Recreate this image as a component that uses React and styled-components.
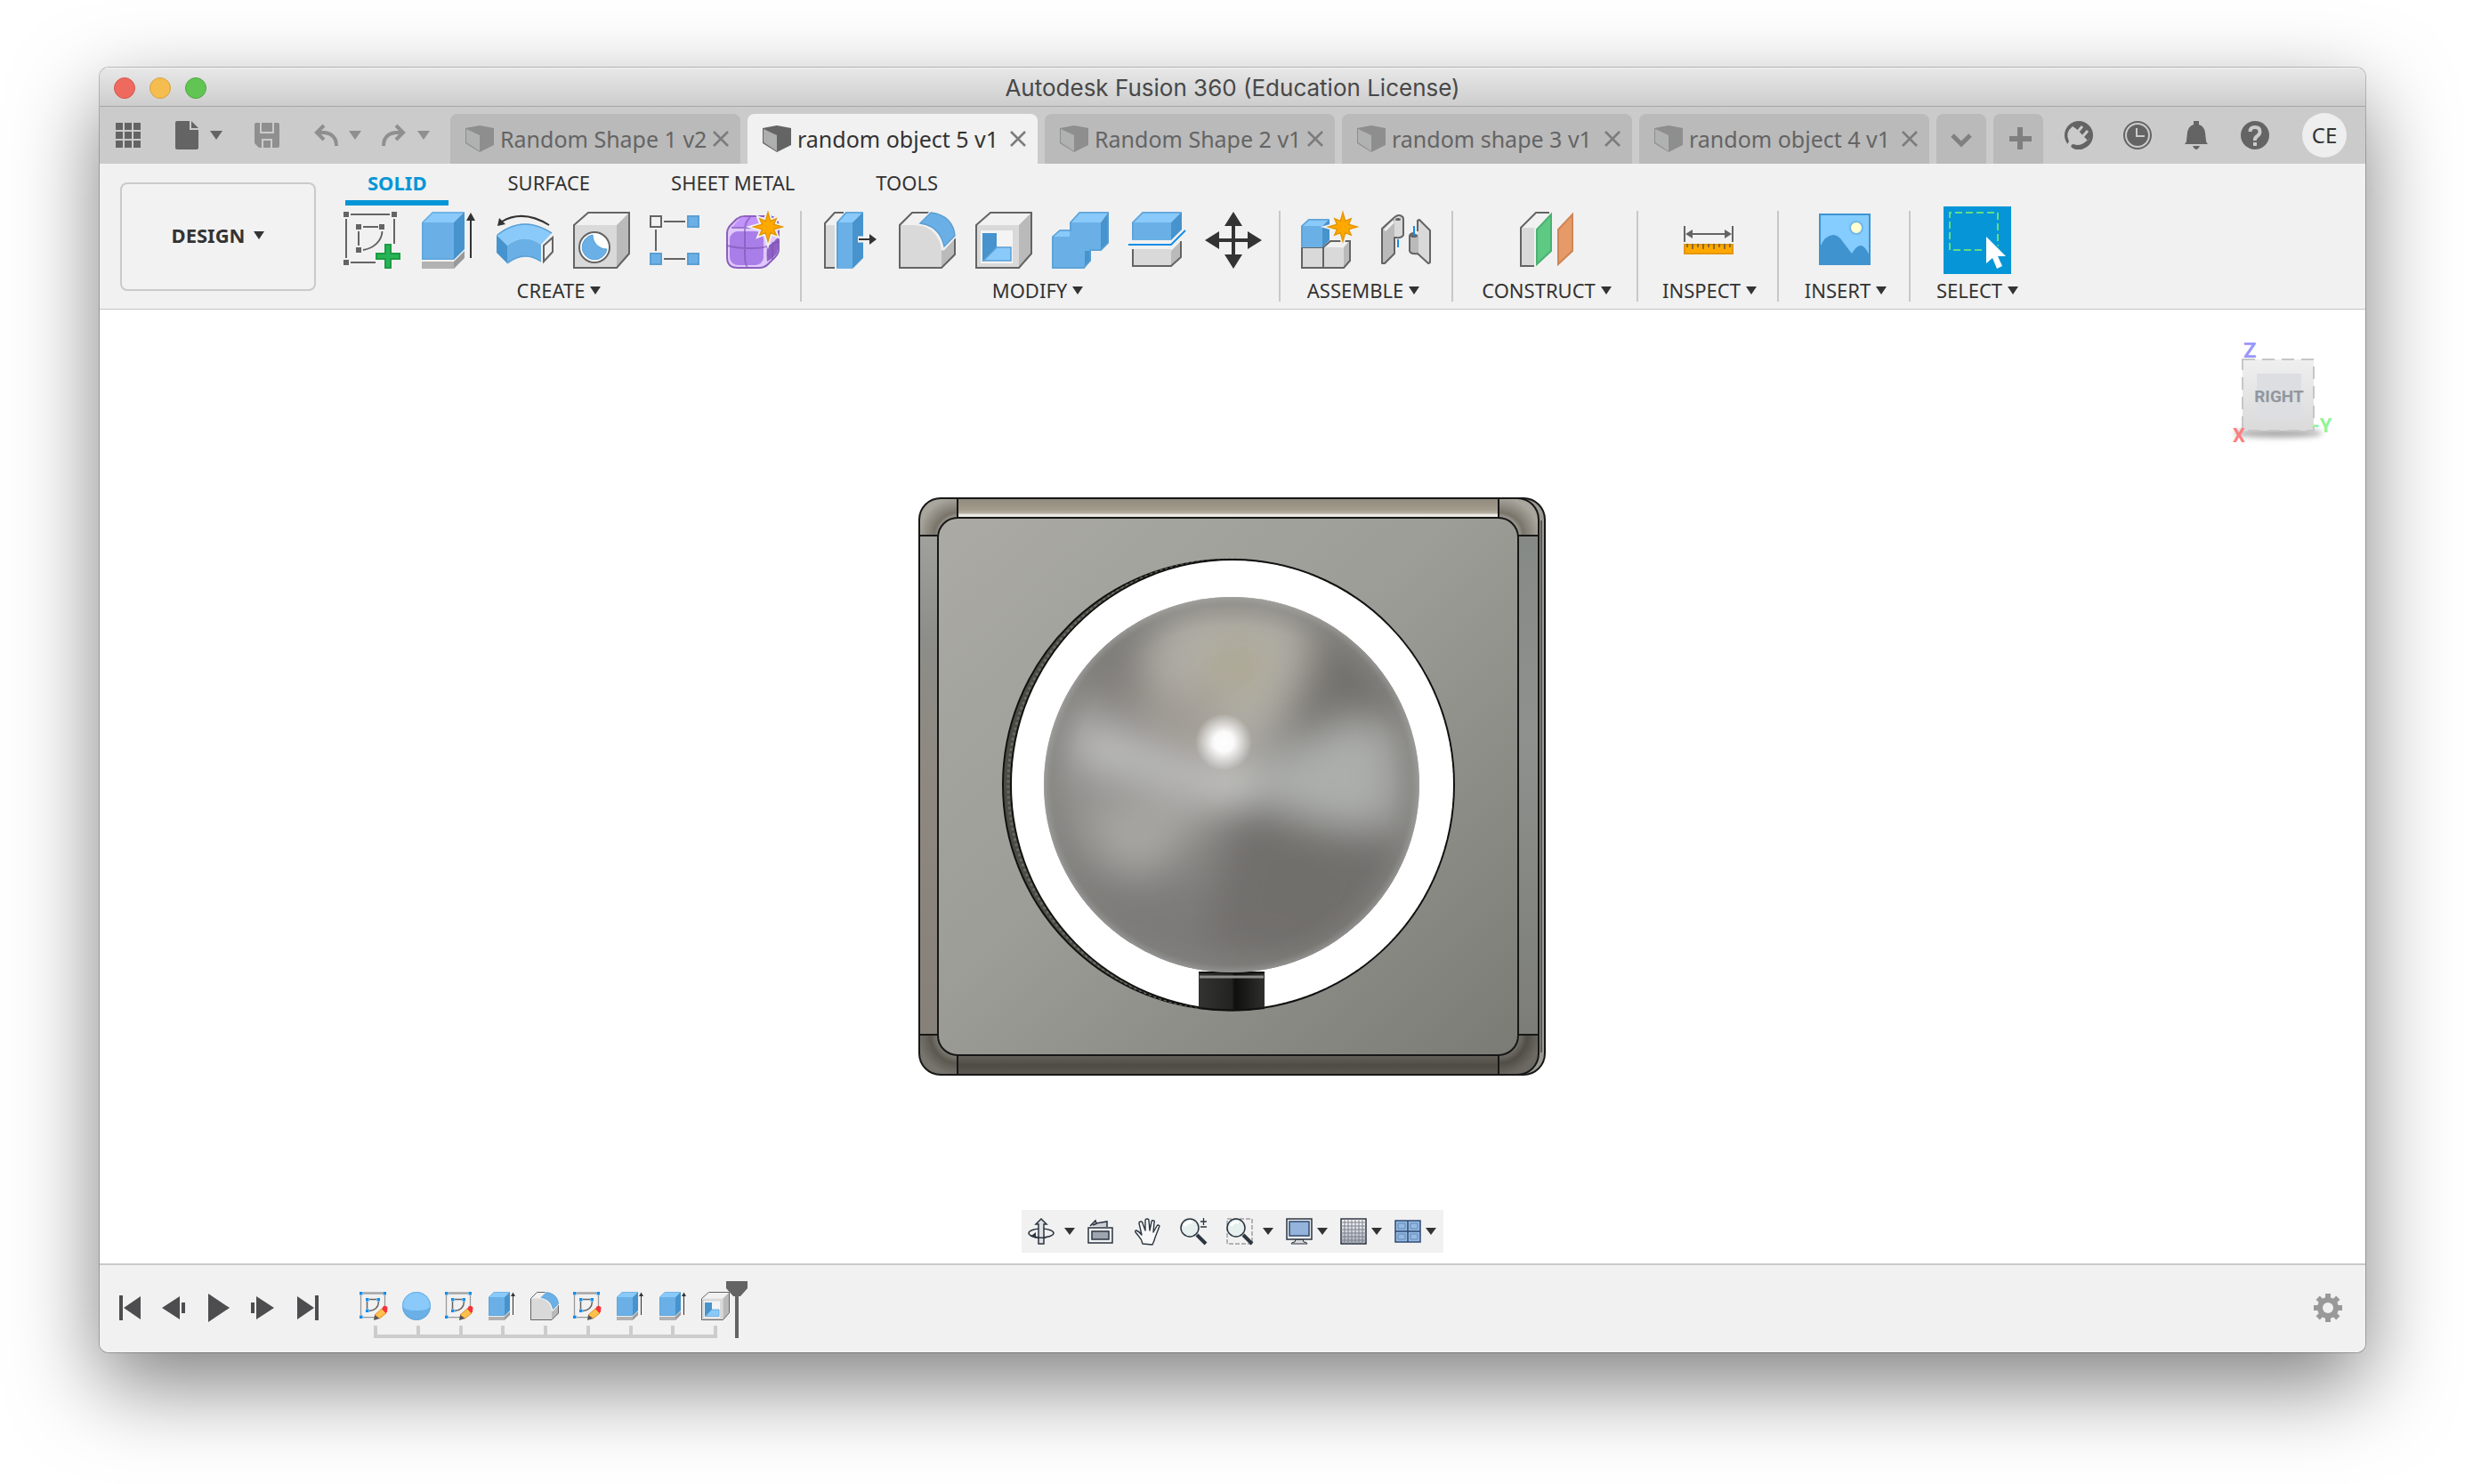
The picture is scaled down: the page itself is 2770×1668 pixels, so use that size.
import React from "react";
import styled, { createGlobalStyle, css } from "styled-components";

const ui = `"Noto Sans", "Open Sans", sans-serif`;

const GlobalStyle = createGlobalStyle`
  * { box-sizing: border-box; }
  body { margin: 0; background: #fff; font-family: ${ui}; color: #333; }
  button { appearance: none; border: 0; margin: 0; padding: 0; background: none; font: inherit; color: inherit; cursor: pointer; }
  ul, ol { list-style: none; margin: 0; padding: 0; }
  h1 { margin: 0; }
  svg { display: block; flex: none; overflow: visible; }
`;

/* ---------- shell ---------- */

const Desktop = styled.div`
  min-height: 100vh;
  padding: 76px 112px 148px;
  display: flex;
`;

const AppWindow = styled.div`
  flex: 1;
  min-width: 0;
  display: flex;
  flex-direction: column;
  border-radius: 10px;
  overflow: hidden;
  background: #fff;
  box-shadow: 0 0 0 1px rgba(0, 0, 0, 0.22), 0 36px 96px rgba(0, 0, 0, 0.5);
`;

const TitleBar = styled.header`
  display: flex;
  align-items: center;
  height: 44px;
  padding: 2px 16px 0;
  background: linear-gradient(#e8e8e8, #cdcdcd);
  border-bottom: 1px solid #a6a6a6;
  box-shadow: inset 0 1px 0 #f4f4f4;
`;

const Lights = styled.div`
  flex: 1;
  display: flex;
  gap: 16px;
`;

const Light = styled.button`
  width: 24px;
  height: 24px;
  border-radius: 50%;
  background: ${(p) => p.$fill};
  border: 1px solid ${(p) => p.$edge};
`;

const Title = styled.h1`
  font: 400 26px/32px Inter, Roboto, sans-serif;
  color: #484848;
  white-space: nowrap;
`;

const TitleSpacer = styled.div`
  flex: 1;
`;

/* ---------- document bar ---------- */

const DocumentBar = styled.nav`
  display: flex;
  align-items: center;
  height: 64px;
  padding: 0 21px 0 16px;
  background: #cbcbcb;
`;

const QuickActions = styled.div`
  display: flex;
  align-items: center;
  gap: ${(p) => (p.$tight ? 21 : 34)}px;
`;

const IconButton = styled.button`
  display: flex;
  align-items: center;
  gap: 10px;
  color: ${(p) => (p.$muted ? "#8f8f8f" : "#646464")};
`;

const DocTabs = styled.div`
  flex: 1;
  min-width: 0;
  align-self: flex-end;
  display: flex;
  gap: 8px;
  margin: 0 24px 0 23px;
`;

const tabShape = css`
  height: 56px;
  display: flex;
  align-items: center;
  border-radius: 8px 8px 0 0;
  background: #bababa;
`;

const DocTab = styled.div`
  ${tabShape}
  flex: 0 1 326px;
  min-width: 0;
  padding: 0 13px 0 17px;
  color: #646464;
  ${(p) => p.$active && css`background: #f1f1f1; color: #333;`}
`;

const DocTabName = styled.button`
  flex: 1;
  min-width: 0;
  display: flex;
  align-items: center;
  gap: 7px;
  font-size: 25px;
  line-height: 34px;
  white-space: nowrap;
`;

const CloseButton = styled.button`
  color: #7c7c7c;
`;

const SmallTab = styled.button`
  ${tabShape}
  width: 56px;
  flex: none;
  justify-content: center;
  color: #808080;
`;

const Services = styled.div`
  display: flex;
  align-items: center;
  gap: 34px;
`;

const Avatar = styled.button`
  width: 50px;
  height: 50px;
  margin-left: 3px;
  border-radius: 50%;
  background: #eee;
  color: #333;
  font-size: 24px;
  line-height: 50px;
`;

/* ---------- ribbon ---------- */

const Ribbon = styled.section`
  display: flex;
  align-items: flex-start;
  height: 164px;
  padding-left: 23px;
  background: #f1f1f1;
  border-bottom: 1px solid #c6c6c6;
`;

const WorkspaceButton = styled.button`
  display: flex;
  align-items: center;
  justify-content: center;
  gap: 10px;
  width: 220px;
  height: 122px;
  margin: 21px 31px 0 0;
  padding-bottom: 4px;
  border: 2px solid #cacaca;
  border-radius: 8px;
  background: #f2f2f2;
  font-size: 22px;
  font-weight: 700;
  line-height: 30px;
`;

const RibbonMain = styled.div`
  flex: 1;
  min-width: 0;
`;

const RibbonTabs = styled.div`
  display: flex;
  gap: 41px;
  padding-left: 2px;
  height: 47px;
`;

const RibbonTab = styled.button`
  height: 47px;
  padding: 10px 25px 9px;
  font-size: 22px;
  line-height: 22px;
  white-space: nowrap;
  border-bottom: 6px solid transparent;
  ${(p) => p.$active && css`color: #0696d7; border-color: #0696d7; font-weight: 700;`}
`;

const ToolGroups = styled.div`
  display: flex;
  margin-top: 1px;
`;

const ToolGroup = styled.div`
  flex: none;
  display: flex;
  flex-direction: column;
  align-items: center;
  width: ${(p) => p.$width}px;
`;

const GroupDivider = styled.div`
  flex: none;
  width: 2px;
  height: 102px;
  margin: 5px 23px 0 19px;
  background: #c8c8c8;
`;

const ToolRow = styled.div`
  display: flex;
  align-items: center;
  gap: 22px;
  height: 76px;
`;

const ToolButton = styled.button`
  display: block;
  background: ${(p) => (p.$active ? "#0696d7" : "none")};
`;

const GroupLabel = styled.button`
  display: flex;
  align-items: center;
  gap: 6px;
  margin-top: 6px;
  padding-right: ${(p) => (p.$wide ? 10 : 0)}px;
  font-size: 22px;
  line-height: 24px;
  white-space: nowrap;
`;

/* ---------- canvas ---------- */

const Viewport = styled.main`
  position: relative;
  flex: 1;
  display: flex;
  align-items: center;
  justify-content: center;
  padding-top: 2px;
  background: #fff;
`;

const ViewCube = styled.button`
  position: absolute;
  top: 32px;
  right: 32px;
`;

const NavBar = styled.div`
  position: absolute;
  bottom: 12px;
  left: 50%;
  transform: translateX(-50%);
  display: flex;
  align-items: center;
  gap: 14px;
  height: 48px;
  padding: 0 8px 0 7px;
  background: #f1f1f1;
`;

const NavButton = styled.button`
  display: flex;
  align-items: center;
  gap: ${(p) => (p.$split ? 11 : 5)}px;
  margin-right: ${(p) => (p.$plain ? 8 : 0)}px;
  color: #333;
`;

/* ---------- timeline ---------- */

const Timeline = styled.footer`
  display: flex;
  align-items: flex-end;
  height: 100px;
  padding: 0 26px 16px 18px;
  background: #f1f1f1;
  border-top: 2px solid #cacaca;
`;

const Playback = styled.div`
  display: flex;
  gap: 18px;
  margin: 0 42px 18px 0;
  color: #4d4d4f;
`;

const PlaybackButton = styled.button`
  width: 32px;
  height: 32px;
`;

const History = styled.div`
  display: flex;
  flex-direction: column;
`;

const HistoryItems = styled.ol`
  display: flex;
  gap: 16px;
`;

const HistoryTrack = styled.div`
  display: flex;
  justify-content: space-between;
  height: 14px;
  margin: 6px 14px 0 16px;
  border-bottom: 4px solid #ccc;
`;

const HistoryTick = styled.span`
  width: 4px;
  background: #ccc;
`;

const HistoryMarker = styled.button`
  margin-left: -4px;
`;

const SettingsButton = styled.button`
  margin: 0 0 18px auto;
  color: #999;
`;

/* ---------- icons ---------- */

const Svg = ({ s = 64, v = "0 0 64 64", children, ...r }) => (
  <svg width={s} height={s} viewBox={v} fill="none" aria-hidden="true" {...r}>{children}</svg>
);

const Caret = ({ w = 12, h = 9 }) => (
  <svg width={w} height={h} viewBox="0 0 12 9" preserveAspectRatio="none" aria-hidden="true"><path d="M0 0h12L6 9z" fill="currentColor" /></svg>
);

const BLUE = "#6ab0e6", LIGHT = "#8acafb", DARK = "#4693cd", EDGE = "#5a9fd4", LINE = "#646464";
const GREY = "#d9d9d9", PALE = "#f1f1f1", SHADE = "#bababa";

const Star = ({ x = 47, y = 17 }) => {
  const pts = Array.from({ length: 16 }, (_, i) => {
    const r = i % 2 ? 7 : i % 4 ? 13 : 16;
    const a = (i * Math.PI) / 8;
    return `${(x + r * Math.sin(a)).toFixed(1)},${(y - r * Math.cos(a)).toFixed(1)}`;
  }).join(" ");
  return (
    <g>
      <polygon points={pts} fill="#f1f1f1" stroke="#f1f1f1" strokeWidth="5" />
      <polygon points={pts} fill="#ffa800" stroke="#e59700" strokeWidth="1.5" />
    </g>
  );
};

const SketchTool = () => (
  <Svg>
    <g fill={LINE}>
      <path d="M0 0h6v6H0zM54 0h6v6h-6zM0 54h6v6H0zM14 14h6v6h-6zM40 14h6v6h-6zM14 40h6v6h-6z" />
    </g>
    <path d="M8 3h44M3 8v44M57 8v28M8 57h28M22 17h17M17 22v16M22 43C34 41 43 33 43.500 22" stroke={LINE} strokeWidth="2" />
    <path d="M47 37h6v10h10v6H53v10h-6V53H37v-6h10z" fill="#26b456" stroke="#1d9c45" strokeWidth="2" />
  </Svg>
);

const ExtrudeTool = ({ s }) => (
  <Svg s={s}>
    <path d="M2 12h36v42H2z" fill={BLUE} />
    <path d="M2 12 14 0h36L38 12z" fill={LIGHT} />
    <path d="M38 12 50 0v42L38 54z" fill={DARK} />
    <path d="M3 12v41h35M3 12 14 1h35" stroke={EDGE} strokeWidth="1.500" opacity=".7" />
    <path d="M2 56h36v8H2z" fill="#b2b2b2" />
    <path d="m38 56 12-12v8L38 64z" fill="#999" />
    <path d="M57 8v44" stroke="#333" strokeWidth="2" />
    <path d="m57 1 5 9H52z" fill="#333" />
  </Svg>
);

const RevolveTool = () => (
  <Svg>
    <path d="M6 11Q30-3 59 15" stroke="#333" strokeWidth="2" />
    <path d="m1 16 2-9 7 7z" fill="#333" />
    <path d="M0 26Q30 2 62 24L50 37Q31 23 12 38z" fill={LIGHT} />
    <path d="M1 26Q30 3 62 24" stroke={EDGE} strokeWidth="1.500" />
    <path d="m0 26 12 12v20L0 46z" fill={DARK} />
    <path d="M12 38Q31 23 50 37v19Q31 43 12 58z" fill={BLUE} />
    <path d="M12 58Q31 43 50 56" stroke={EDGE} strokeWidth="1.500" />
    <path d="m53 38 10-9v16L53 56z" fill={PALE} stroke={LINE} strokeWidth="2" />
  </Svg>
);

const Block = () => (
  <g>
    <path d="M1 15h48v48H1z" fill={GREY} />
    <path d="M1 15 17 1h46L49 15z" fill={PALE} />
    <path d="M49 15 63 1v46L49 63z" fill={SHADE} />
    <path d="M1 15 17 1h46v46L49 63H1z" stroke={LINE} strokeWidth="2" />
  </g>
);

const HoleTool = () => (
  <Svg>
    <Block />
    <circle cx="24" cy="40" r="17" fill="#fff" stroke={LINE} strokeWidth="2" />
    <path d="M22 26A14 14 0 1 0 38 42C29 42 22 35 22 26z" fill={BLUE} stroke={EDGE} strokeWidth="1" />
  </Svg>
);

const PatternTool = () => (
  <Svg>
    <path d="M1 5h12v12H1z" stroke={LINE} strokeWidth="2" />
    <path d="M43 5h12v12H43zM1 47h12v12H1zM43 47h12v12H43z" fill={BLUE} stroke={EDGE} strokeWidth="2" />
    <path d="M16 11h24M7 20v24M16 53h24" stroke={LINE} strokeWidth="2" />
  </Svg>
);

const FormTool = () => (
  <Svg>
    <path d="M1 24C1 17 7 13 12 8q4-3 9-3h27q11 1 11 13v24q0 5-4 9l-8 8q-4 4-10 4H13Q1 63 1 51z" fill="#e0c8fb" stroke="#8b60be" strokeWidth="2" />
    <path d="m6 18 8-9q3-3 7-3h13l4 12z" fill="#c294fb" />
    <rect x="4" y="22" width="38" height="38" rx="9" fill="#aa7ee8" />
    <path d="M46 40q6-4 12-11v13q0 4-3 7-5 5-9 7-1-8 0-16z" fill="#8f61c6" />
    <path d="M27 6q-6 6-6 14v28q0 12 3 14M1 38q10 3 24 3 22 1 34-8M6 18h32M52 34v20" stroke="#7a52ad" strokeWidth="2" opacity=".6" />
    <Star />
  </Svg>
);

const PressPullTool = () => (
  <Svg>
    <path d="M24 1H14L3 13v50h11" fill={PALE} />
    <path d="M3 15h11v47H3z" fill={GREY} />
    <path d="M24 1H14L3 13v50h11" stroke={LINE} strokeWidth="2" />
    <path d="M16 12h18v52H16z" fill={BLUE} />
    <path d="M16 12 26 0h20L34 12z" fill={LIGHT} />
    <path d="M34 12 46 0v52L34 64z" fill={DARK} />
    <path d="M17 63V12L27 1h18" stroke={EDGE} strokeWidth="1.500" />
    <path d="M40 31h16" stroke="#f1f1f1" strokeWidth="7" />
    <path d="M41 31h14" stroke="#333" strokeWidth="2" />
    <path d="m61 31-8-6v12z" fill="#333" />
  </Svg>
);

const FilletTool = ({ s }) => (
  <Svg s={s}>
    <path d="M1 15 15 1h19L23 15z" fill={PALE} />
    <path d="M48 44 63 30v19L48 63z" fill={SHADE} />
    <path d="M1 15h20c16 1 27 15 27 31v17H1z" fill={GREY} />
    <path d="M34 1H15L1 15v48h47l15-15V30" stroke={LINE} strokeWidth="2" />
    <path d="M23 14 36 0c18 2 27 12 28 27L51 41C48 26 39 16 23 14z" fill={BLUE} stroke="#f1f1f1" strokeWidth="3" />
    <path d="M24 13 36 1c17 2 26 12 27 26L51 39C48 25 39 15 24 13z" fill={BLUE} stroke={EDGE} strokeWidth="1.500" />
  </Svg>
);

const ShellTool = ({ s }) => (
  <Svg s={s}>
    <Block />
    <path d="M6 21h36v37H6z" fill="#f4f4f4" />
    <path d="M8 24h16v16L8 56z" fill={DARK} />
    <path d="M24 40h16v15H9z" fill={LIGHT} stroke={EDGE} strokeWidth="1.500" />
  </Svg>
);

const CombineTool = () => (
  <Svg>
    <path d="M0 28 9 20h12v8zM20 12 31 0h33L55 12z" fill={LIGHT} />
    <path d="M55 12 64 0v35l-9 9zM36 44h8v11l-8 9z" fill={DARK} />
    <path d="M0 28h20V12h35v32H37v20H0z" fill={BLUE} />
    <path d="M1 63V28l8-7h12v-9L31 1h32v34l-8 8H43v12l-7 8z" stroke={EDGE} strokeWidth="1.500" />
  </Svg>
);

const SplitTool = () => (
  <Svg>
    <path d="M4 12h44v20H4z" fill={BLUE} />
    <path d="M4 12 16 0h44L48 12z" fill={LIGHT} />
    <path d="M48 12 60 0v20L48 32z" fill={DARK} />
    <path d="M5 31V12L16 1h43" stroke={EDGE} strokeWidth="1.500" />
    <path d="M0 37h48l16-16" stroke="#158de6" strokeWidth="2" />
    <path d="M5 42h43v19H5z" fill={GREY} />
    <path d="m48 44 11-11v18L48 61z" fill={SHADE} />
    <path d="M5 42v19h43l11-10V33" stroke={LINE} strokeWidth="2" />
  </Svg>
);

const MoveTool = () => (
  <Svg>
    <path d="M32 10v44M10 32h44" stroke="#333" strokeWidth="4" />
    <path d="m32 0 10 16H22zM32 64 22 48h20zM0 32l16-10v20zM64 32 48 42V22z" fill="#333" />
  </Svg>
);

const ComponentTool = () => (
  <Svg>
    <path d="M1 40h24v23H1z" fill={GREY} stroke={LINE} strokeWidth="2" />
    <path d="m25 40 8-8h22l-7 8z" fill={PALE} />
    <path d="m48 40 7-8v23l-7 8z" fill={SHADE} />
    <path d="M25 40h23v23H25z" fill={GREY} />
    <path d="m25 40 8-7h22v22l-7 8H25z" stroke={LINE} strokeWidth="2" />
    <path d="M0 16h24v24H0z" fill={BLUE} />
    <path d="m0 16 8-8h24l-8 8z" fill={LIGHT} />
    <path d="m24 16 8-8v24l-8 8z" fill={DARK} />
    <path d="M1 39V16l8-7h22" stroke={EDGE} strokeWidth="1.500" />
    <Star />
  </Svg>
);

const JointTool = () => (
  <Svg>
    <path d="M5 19 19 6v41L8 58H5z" fill={SHADE} />
    <path d="M19 6q10-6 10 1v20q-4 4-10 1z" fill={GREY} />
    <path d="M29 8v18q-2 4-8 3h-2v18L8 58H5V19L17 8q6-6 10-3 2 1 2 3z" stroke={LINE} strokeWidth="2" strokeLinejoin="round" />
    <path d="m8 21 10-10" stroke={PALE} strokeWidth="3" />
    <ellipse cx="23" cy="8.500" rx="3" ry="1.500" fill={LINE} />
    <path d="M23 31v9" stroke="#158de6" strokeWidth="2" />
    <path d="M45 10h3l11 11v37h-2L45 47z" fill={GREY} />
    <path d="M36 27q5-6 10 0v20q-5 2-10-1z" fill={SHADE} />
    <path d="M45 22V10l2-1 12 12v36l-2 1-12-11q-8 1-9-3V27q1-3 5-3" stroke={LINE} strokeWidth="2" strokeLinejoin="round" />
    <ellipse cx="41" cy="27" rx="4" ry="2" fill={LINE} />
    <path d="M41 16v11" stroke="#158de6" strokeWidth="2" />
  </Svg>
);

const PlaneTool = () => (
  <Svg>
    <path d="M3 18h15v43H3z" fill={GREY} />
    <path d="M3 18 20 1h15L18 18z" fill={PALE} />
    <path d="M35 1H20L3 18v43h15" stroke={LINE} strokeWidth="2" />
    <path d="M20 19 38 1v43L20 61z" fill={PALE} stroke={PALE} strokeWidth="3" />
    <path d="M21 20 37 3v41L21 59z" fill="#5dc983" stroke="#4bb171" strokeWidth="2" />
    <path d="M45 20 61 3v41L45 59z" fill="#e69a68" stroke="#cf8554" strokeWidth="2" />
  </Svg>
);

const MeasureTool = () => (
  <Svg>
    <path d="M4 16v18M58 16v18M8 25h46" stroke={LINE} strokeWidth="2" />
    <path d="m5 25 8-5v10zM57 25l-8-5v10z" fill={LINE} />
    <path d="M4 37h54v10H4z" fill="#ffa800" stroke="#e59700" strokeWidth="2" />
    <path d="M7 36v4M13 36v6M19 36v4M25 36v6M31 36v4M37 36v6M43 36v4M49 36v6M55 36v4" stroke="#8a6a30" strokeWidth="2" />
  </Svg>
);

const PictureTool = () => (
  <Svg>
    <path d="M3 3h56v56H3z" fill="#85ccff" />
    <path d="M3 40q6-14 15-14 6 0 11 8l10 13q5-9 10-9t10 12v9H3z" fill="#3f94cf" />
    <circle cx="44" cy="18" r="7" fill="#ffffcf" stroke="#6fb7ea" strokeWidth="2" />
    <path d="M3 3h56v56H3z" stroke="#3f94cf" strokeWidth="2" />
  </Svg>
);

const SelectTool = () => (
  <Svg s={76} v="0 0 76 76">
    <path d="M7 49V7h54v42z" stroke="#63dc84" strokeWidth="2" strokeDasharray="8 4" />
    <path d="M48 34v30l7-6 5 12 6-3-5-11h9z" fill="#0696d7" stroke="#0696d7" strokeWidth="4" />
    <path d="M48 34v30l7-6 5 12 6-3-5-11h9z" fill="#fff" />
  </Svg>
);

const GridIcon = () => (
  <Svg s={32} v="0 0 32 32">
    <path fill="currentColor" d="M2 2h8v8H2zM12 2h8v8h-8zM22 2h8v8h-8zM2 12h8v8H2zM12 12h8v8h-8zM22 12h8v8h-8zM2 22h8v8H2zM12 22h8v8h-8zM22 22h8v8h-8z" />
  </Svg>
);
const FileIcon = () => (
  <Svg s={32} v="0 0 32 32"><path fill="currentColor" d="M5 0h14v10h10v20q0 2-2 2H5q-2 0-2-2V2q0-2 2-2zM21 0l8 8h-8z" /></Svg>
);
const SaveIcon = () => (
  <Svg s={32} v="0 0 32 32">
    <path fill="currentColor" fillRule="evenodd" d="M2 4q0-2 2-2h24q2 0 2 2v24q0 2-2 2H7l-5-5zM8 2v12h16V2h-2v10H10V2zM10 30h2v-8h8v8h2V20H10z" />
  </Svg>
);
const UndoIcon = ({ flip }) => (
  <Svg s={32} v="0 0 32 32" transform={flip ? "scale(-1 1)" : undefined}>
    <path d="M14 5 6 13l8 8M6 13q22-2 22 15" stroke="currentColor" strokeWidth="4" />
  </Svg>
);
const CubeIcon = ({ active }) => (
  <Svg s={32} v="0 0 32 32">
    <path d="M0 4 16 1l16 3v19L16 31 0 21z" fill={active ? "#646464" : "#8e8e8e"} />
    <path d="M1 5l15 7v18L1 20z" fill={active ? "#adafaf" : "#b0b2b2"} />
  </Svg>
);
const CloseIcon = () => (
  <Svg s={18} v="0 0 18 18"><path d="m1 1 16 16M17 1 1 17" stroke="currentColor" strokeWidth="2.500" /></Svg>
);
const ChevronIcon = () => (
  <Svg s={32} v="0 0 32 32"><path d="m6 12 10 10 10-10" stroke="currentColor" strokeWidth="5" /></Svg>
);
const PlusIcon = () => (
  <Svg s={32} v="0 0 32 32"><path d="M18 3v25M6 16h25" stroke="currentColor" strokeWidth="6" /></Svg>
);
const PlugIcon = () => (
  <Svg s={32} v="0 0 32 32">
    <circle cx="16" cy="16" r="16" fill="currentColor" />
    <path d="M9 6l3 2 16 12-4 3q-7 6-14 3l-4 5-4-3 3-5Q0 13 9 6z" fill="#cbcbcb" />
    <path d="m11 6 15 16 4-6L20 2z" fill="currentColor" />
    <path d="m14 13 6-7M20 18l6-7" stroke="#cbcbcb" strokeWidth="3" />
    <path d="M7 28q2 3 6 4h6l8-5 3-5q-3 6-9 7-6 1-12-3z" fill="currentColor" />
  </Svg>
);
const ClockIcon = () => (
  <Svg s={32} v="0 0 32 32">
    <circle cx="16" cy="16" r="15" stroke="currentColor" strokeWidth="2" />
    <circle cx="16" cy="16" r="12" fill="currentColor" />
    <path d="M15 8v9h9" stroke="#cbcbcb" strokeWidth="2" />
  </Svg>
);
const BellIcon = () => (
  <Svg s={32} v="0 0 32 32">
    <path fill="currentColor" d="M13 0h6v4q6 2 7 9l1 9q0 2 2 4H3q2-2 2-4l1-9q1-7 7-9zM12 28h8q-4 8-8 0z" />
  </Svg>
);
const HelpIcon = () => (
  <Svg s={32} v="0 0 32 32">
    <circle cx="16" cy="16" r="16" fill="currentColor" />
    <path d="M10.500 12q0-5 5.500-5t5.500 5q0 3-3 5t-2.500 5" stroke="#cbcbcb" strokeWidth="4" />
    <path d="M14 24h4v4h-4z" fill="#cbcbcb" />
  </Svg>
);

/* ---------- navigation icons ---------- */

const NAVY = "#2c3540";
const Nav = (p) => <Svg s={30} v="0 0 30 30" {...p} />;

const OrbitIcon = () => (
  <Nav>
    <ellipse cx="15" cy="17" rx="14" ry="5" stroke={NAVY} strokeWidth="1.500" />
    <path d="m15 1 6 6h-3v22h-6V7H9z" fill="#dde0e4" stroke={NAVY} strokeWidth="1.500" />
    <path d="M3 20q7 3 17 2" stroke={NAVY} strokeWidth="1.500" />
    <path d="m4 20 5-4v7z" fill={NAVY} />
  </Nav>
);
const LookAtIcon = () => (
  <Nav>
    <path d="m3 9 6-6 1 3 12-2v6M6 8l5-2" fill="#c9ccd1" stroke={NAVY} strokeWidth="1.500" />
    <path d="M1 11h27v17H1z" fill="#f2f3f5" stroke={NAVY} strokeWidth="1.500" />
    <path d="M5 15h19v9H5z" fill="#9ea4b0" stroke={NAVY} strokeWidth="1.500" />
  </Nav>
);
const HandIcon = () => (
  <Nav>
    <path d="M10 29q-1-5-4-8l-4-5q-1-2 1-2 3 1 6 5L6 6q0-2 2-2t2 2l3 8V3q0-2 2-2t2 2l1 11 2-10q1-2 2-1 2 0 1 2l-1 11 4-7q1-2 3 0l-5 13q-1 4-3 8z" fill="#f7f8f9" stroke={NAVY} strokeWidth="1.400" strokeLinejoin="round" />
  </Nav>
);
const Lens = () => (
  <g>
    <path d="m19 19 10 10" stroke={NAVY} strokeWidth="4" />
    <circle cx="11" cy="11" r="10" fill="#e6f0ef" stroke={NAVY} strokeWidth="1.500" />
    <path d="M5 9q3-5 9-4" stroke="#fff" strokeWidth="3" />
  </g>
);
const ZoomIcon = () => (
  <Nav><Lens /><path d="M23 4h7M26.500 0v8M23 10h7" stroke={NAVY} strokeWidth="1.300" /></Nav>
);
const ZoomWindowIcon = () => (
  <Nav><path d="M1 1h28v28H1z" stroke="#777" strokeDasharray="5 2" /><Lens /></Nav>
);
const DisplayIcon = () => (
  <Nav>
    <path d="M11 24h8l1 3q4 0 4 2H6q0-2 4-2z" fill="#d6d9dd" stroke={NAVY} />
    <path d="M1 1h28v23H1z" fill="#eceef0" stroke={NAVY} strokeWidth="1.500" />
    <path d="M4 4h22v16H4z" fill="#94b4dc" stroke="#2f4a72" strokeWidth="1.500" />
  </Nav>
);
const GridDisplayIcon = () => (
  <Nav>
    <defs><linearGradient id="gridFill" x2="0" y2="1"><stop stopColor="#fff" /><stop offset="1" stopColor="#a9aebc" /></linearGradient></defs>
    <path d="M1 1h28v28H1z" fill="url(#gridFill)" stroke={NAVY} strokeWidth="1.500" />
    <path d="M5 1v28M9 1v28M13 1v28M17 1v28M21 1v28M25 1v28M1 5h28M1 9h28M1 13h28M1 17h28M1 21h28M1 25h28" stroke="#7b7f88" />
  </Nav>
);
const ViewportsIcon = () => (
  <Nav>
    <path d="M1 3h28v24H1z" fill="#94b9e2" stroke="#2f4a72" strokeWidth="1.500" />
    <path d="M15 3v24M1 15h28" stroke="#2f4a72" strokeWidth="1.500" />
    <path d="M4 6h8v6H4zM18 6h8v6h-8zM4 18h8v6H4zM18 18h8v6h-8z" stroke="#6288b8" />
  </Nav>
);

/* ---------- timeline icons ---------- */

const SketchFeature = () => (
  <Svg s={32}>
    <path d="M8 3h44" stroke="#a5a5a5" strokeWidth="5" />
    <path d="M3 8v44M57 8v24M8 57h26" stroke="#999" strokeWidth="2.500" />
    <path d="M22 17h16M17 22v16M22 43q20-2 21-21" stroke={LINE} strokeWidth="3" />
    <path d="M0 0h7v7H0zM53 0h7v7h-7zM0 53h7v7H0zM14 14h7v7h-7zM39 14h7v7h-7zM14 39h7v7h-7z" fill="#158de6" />
    <path d="m34 52 16-14 10 10-15 12z" fill="#ffc04d" stroke="#e0922a" strokeWidth="2" />
    <path d="m50 38 4-6q6-2 9 3l-1 10-3 3z" fill="#f5343c" />
    <path d="m32 64 2-12 11 8z" fill="#555" />
  </Svg>
);
const SphereFeature = () => (
  <Svg s={32}>
    <circle cx="32" cy="32" r="32" fill={BLUE} />
    <path d="M0 32a32 32 0 0 1 64 0Q60 42 32 42T0 32z" fill={LIGHT} />
    <circle cx="32" cy="32" r="31" stroke={EDGE} strokeWidth="2" opacity=".6" />
  </Svg>
);
const GearIcon = () => (
  <Svg s={32} v="0 0 32 32">
    {[0, 45, 90, 135].map((a) => (
      <path key={a} d="M13 0h6v32h-6z" fill="currentColor" transform={`rotate(${a} 16 16)`} />
    ))}
    <circle cx="16" cy="16" r="12" fill="currentColor" />
    <circle cx="16" cy="16" r="6" fill="#f1f1f1" />
  </Svg>
);

/* ---------- model ---------- */

const Model = () => (
  <svg width="706" height="652" viewBox="0 0 706 652" fill="none" role="img" aria-label="Model, right view">
    <defs>
      <linearGradient id="face" x1="0" y1="0" x2="1" y2="1"><stop stopColor="#abaaa5" /><stop offset=".45" stopColor="#9c9d97" /><stop offset="1" stopColor="#7a7b74" /></linearGradient>
      <linearGradient id="top" x2="0" y2="1"><stop stopColor="#8f897e" /><stop offset=".55" stopColor="#a39b8b" /><stop offset=".7" stopColor="#b4ada0" /><stop offset=".8" stopColor="#f6f4f0" /><stop offset="1" stopColor="#b0aca5" /></linearGradient>
      <linearGradient id="bottom" x2="0" y2="1"><stop stopColor="#67635b" /><stop offset=".5" stopColor="#4f4c45" /><stop offset="1" stopColor="#605c54" /></linearGradient>
      <linearGradient id="left" x2="0" y2="1"><stop stopColor="#a0a09d" /><stop offset=".2" stopColor="#8d8d89" /><stop offset=".5" stopColor="#8e8880" /><stop offset="1" stopColor="#858078" /></linearGradient>
      <linearGradient id="right" x2="0" y2="1"><stop stopColor="#868a86" /><stop offset=".4" stopColor="#8e918d" /><stop offset="1" stopColor="#7c7d78" /></linearGradient>
      <radialGradient id="cornerA" cx="1" cy="1" r="1"><stop offset=".3" stopColor="#d9d6ce" /><stop offset=".6" stopColor="#79746a" /><stop offset="1" stopColor="#a9a69d" /></radialGradient>
      <radialGradient id="cornerB" cx="0" cy="1" r="1"><stop offset=".3" stopColor="#d9d6ce" /><stop offset=".6" stopColor="#79746a" /><stop offset="1" stopColor="#a9a69d" /></radialGradient>
      <radialGradient id="cornerC" cx="1" cy="0" r="1"><stop offset=".3" stopColor="#a3a19b" /><stop offset=".7" stopColor="#5b5850" /><stop offset="1" stopColor="#77746d" /></radialGradient>
      <radialGradient id="cornerD" cx="0" cy="0" r="1"><stop offset=".3" stopColor="#94928c" /><stop offset=".7" stopColor="#514e47" /><stop offset="1" stopColor="#6c6962" /></radialGradient>
      <linearGradient id="ball" x2="0" y2="1"><stop stopColor="#93918c" /><stop offset=".5" stopColor="#8f8e8b" /><stop offset="1" stopColor="#7a7976" /></linearGradient>
      <radialGradient id="rim"><stop offset=".84" stopColor="#80807c" stopOpacity="0" /><stop offset=".95" stopColor="#82827e" stopOpacity=".4" /><stop offset="1" stopColor="#aaa" stopOpacity=".7" /></radialGradient>
      <radialGradient id="glint"><stop stopColor="#fff" /><stop offset=".35" stopColor="#fff" stopOpacity=".95" /><stop offset="1" stopColor="#fff" stopOpacity="0" /></radialGradient>
      <linearGradient id="slot"><stop stopColor="#333331" /><stop offset=".5" stopColor="#232321" /><stop offset=".55" stopColor="#0f0f0e" /><stop offset="1" stopColor="#2f2f2d" /></linearGradient>
      <filter id="soft" x="-50%" y="-50%" width="200%" height="200%" colorInterpolationFilters="sRGB"><feGaussianBlur stdDeviation="22" /></filter>
      <clipPath id="ballClip"><circle cx="352" cy="323" r="211" /></clipPath>
      <clipPath id="bodyClip"><rect x="1" y="1" width="696" height="648" rx="24" /></clipPath>
    </defs>
    <rect x="640" y="1" width="64" height="648" rx="24" fill="#9a9992" stroke="#171717" strokeWidth="2" />
    <path d="M700 26v598" stroke="#171717" />
    <g clipPath="url(#bodyClip)">
      <rect width="698" height="25" fill="url(#top)" />
      <rect y="626" width="698" height="25" fill="url(#bottom)" />
      <rect y="43" width="23" height="562" fill="url(#left)" />
      <rect x="674" y="43" width="24" height="562" fill="url(#right)" />
      <rect width="45" height="43" fill="url(#cornerA)" />
      <rect x="652" width="46" height="43" fill="url(#cornerB)" />
      <rect y="604" width="45" height="46" fill="url(#cornerC)" />
      <rect x="652" y="604" width="46" height="46" fill="url(#cornerD)" />
    </g>
    <rect x="1" y="1" width="696" height="648" rx="24" stroke="#171717" strokeWidth="2" />
    <path d="M44 0v24M652 0v24M44 626v24M652 626v24M0 43h22M674 43h22M0 604h22M674 604h22" stroke="#171717" strokeWidth="2" />
    <rect x="22" y="23" width="652" height="604" rx="22" fill="url(#face)" stroke="#171717" strokeWidth="2" />
    <circle cx="348" cy="323" r="253" fill="#4c4c46" stroke="#111" strokeWidth="2" />
    <ellipse cx="351" cy="323" rx="250" ry="253" stroke="#6a6a62" strokeWidth="3" strokeDasharray="3 3" />
    <ellipse cx="353" cy="323" rx="249" ry="253" stroke="#111" strokeWidth="2" />
    <ellipse cx="353" cy="323" rx="248" ry="252" fill="#fff" />
    <path d="M315 534h74v40q-37 7-74 0z" fill="url(#slot)" />
    <path d="M315 534h74M315 574q37 5 74 0" stroke="#111" strokeWidth="2" />
    <path d="M316 539h72" stroke="#8d8d8a" strokeWidth="3" />
    <g clipPath="url(#ballClip)">
      <circle cx="352" cy="323" r="213" fill="url(#ball)" />
      <g filter="url(#soft)">
        <path d="M130 180 230 110 320 270z" fill="#7d7b78" />
        <path d="M300 120h110l50 70-90 100h-30L240 190z" fill="#b0ada6" />
        <path d="M230 230 330 210 340 300z" fill="#a39d95" />
        <ellipse cx="358" cy="190" rx="36" ry="34" fill="#aea994" />
        <path d="M460 130 570 230 410 275z" fill="#73716d" />
        <path d="M170 245 350 305v35L180 305z" fill="#bebebe" />
        <path d="M350 320 480 245l50 15 5 100-80 20z" fill="#acaeab" />
        <path d="M350 320 180 345l30 70 50 15z" fill="#a6a5a1" />
        <path d="M355 345 560 395 480 550 320 500z" fill="#716f6c" />
        <path d="M160 430 300 430 340 540H200z" fill="#7c7b79" />
        <ellipse cx="352" cy="325" rx="30" ry="26" fill="#c8c8c5" />
      </g>
      <circle cx="352" cy="323" r="213" fill="url(#rim)" />
      <circle cx="343" cy="275" r="32" fill="url(#glint)" />
    </g>
  </svg>
);

const CubeArt = () => (
  <svg width="126" height="122" viewBox="0 0 126 122" fill="none" aria-hidden="true">
    <defs>
      <linearGradient id="cubeFace" x2="0" y2="1"><stop stopColor="#efefef" /><stop offset="1" stopColor="#dadada" /></linearGradient>
      <filter id="ground" x="-20%" y="-100%" width="140%" height="300%"><feGaussianBlur stdDeviation="3" /></filter>
    </defs>
    <ellipse cx="60" cy="107" rx="50" ry="5" fill="#aaa" filter="url(#ground)" />
    <path d="M20 24h80v80H20z" fill="url(#cubeFace)" />
    <path d="M20 24h80v80H20z" stroke="#c6c6c6" strokeWidth="2" strokeDasharray="14 8" />
    <path d="M36 40h50v50H36z" fill="#dcdee1" />
    <g fontFamily="Roboto, sans-serif" fontWeight="700">
      <text x="61" y="72" fontSize="19" textAnchor="middle" fill="#92979d">RIGHT</text>
      <text x="21" y="22" fontSize="24" fill="#9a98fb">Z</text>
      <text x="9" y="117" fontSize="22" fill="#fb8080">X</text>
      <text x="98" y="106" fontSize="22" fill="#8ff595">-Y</text>
    </g>
  </svg>
);

/* ---------- data ---------- */

const documents = ["Random Shape 1 v2", "random object 5 v1", "Random Shape 2 v1", "random shape 3 v1", "random object 4 v1"];

const ribbonTabs = ["SOLID", "SURFACE", "SHEET METAL", "TOOLS"];

const groups = [
  { name: "CREATE", width: 494, tools: [["Create Sketch", SketchTool], ["Extrude", ExtrudeTool], ["Revolve", RevolveTool], ["Hole", HoleTool], ["Pattern", PatternTool], ["Create Form", FormTool]] },
  { name: "MODIFY", width: 494, tools: [["Press Pull", PressPullTool], ["Fillet", FilletTool], ["Shell", ShellTool], ["Combine", CombineTool], ["Split Body", SplitTool], ["Move", MoveTool]] },
  { name: "ASSEMBLE", width: 150, tools: [["New Component", ComponentTool], ["Joint", JointTool]] },
  { name: "CONSTRUCT", width: 164, tools: [["Offset Plane", PlaneTool]] },
  { name: "INSPECT", width: 114, tools: [["Measure", MeasureTool]] },
  { name: "INSERT", width: 104, tools: [["Insert Image", PictureTool]] },
  { name: "SELECT", width: 104, active: true, tools: [["Select", SelectTool]] },
];

const services = [["Extensions", PlugIcon], ["Job status", ClockIcon], ["Notifications", BellIcon], ["Help", HelpIcon]];

const navTools = [
  { name: "Orbit", Icon: OrbitIcon, menu: true, split: true },
  { name: "Look At", Icon: LookAtIcon },
  { name: "Pan", Icon: HandIcon },
  { name: "Zoom", Icon: ZoomIcon },
  { name: "Zoom Window", Icon: ZoomWindowIcon, menu: true, split: true },
  { name: "Display Settings", Icon: DisplayIcon, menu: true },
  { name: "Grid and Snaps", Icon: GridDisplayIcon, menu: true },
  { name: "Viewports", Icon: ViewportsIcon, menu: true },
];

const playback = [
  ["Go to start", "M4 2h4v28H4zM28 3v26L9 16z"],
  ["Step back", "M22 3v26L2 16zM24 10h4v12h-4z"],
  ["Play", "M4 0l24 16L4 32z"],
  ["Step forward", "M8 3v26l20-13zM2 10h4v12H2z"],
  ["Go to end", "M24 2h4v28h-4zM4 3v26l19-13z"],
];

const features = [
  ["Sketch 1", SketchFeature], ["Sphere", SphereFeature], ["Sketch 2", SketchFeature], ["Extrude 1", ExtrudeTool], ["Fillet", FilletTool],
  ["Sketch 3", SketchFeature], ["Extrude 2", ExtrudeTool], ["Extrude 3", ExtrudeTool], ["Shell", ShellTool],
];

export default function App() {
  const [doc, setDoc] = React.useState(1);
  const [tab, setTab] = React.useState(0);
  return (
    <Desktop>
      <GlobalStyle />
      <AppWindow>
        <TitleBar>
          <Lights>
            <Light aria-label="Close" $fill="#ee6a5f" $edge="#d5574c" />
            <Light aria-label="Minimize" $fill="#f5bd4f" $edge="#d9a03c" />
            <Light aria-label="Zoom window" $fill="#61c554" $edge="#4fa73f" />
          </Lights>
          <Title>Autodesk Fusion 360 (Education License)</Title>
          <TitleSpacer />
        </TitleBar>

        <DocumentBar>
          <QuickActions>
            <IconButton aria-label="Data panel"><GridIcon /></IconButton>
            <IconButton aria-label="File"><FileIcon /><Caret w={14} h={10} /></IconButton>
            <IconButton aria-label="Save" $muted><SaveIcon /></IconButton>
            <QuickActions $tight>
              <IconButton aria-label="Undo" $muted><UndoIcon /><Caret w={14} h={10} /></IconButton>
              <IconButton aria-label="Redo" $muted><UndoIcon flip /><Caret w={14} h={10} /></IconButton>
            </QuickActions>
          </QuickActions>
          <DocTabs>
            {documents.map((name, i) => (
              <DocTab key={name} $active={i === doc}>
                <DocTabName onClick={() => setDoc(i)}><CubeIcon active={i === doc} />{name}</DocTabName>
                <CloseButton aria-label={`Close ${name}`}><CloseIcon /></CloseButton>
              </DocTab>
            ))}
            <SmallTab aria-label="All documents"><ChevronIcon /></SmallTab>
            <SmallTab aria-label="New document"><PlusIcon /></SmallTab>
          </DocTabs>
          <Services>
            {services.map(([name, Icon]) => (
              <IconButton key={name} aria-label={name}><Icon /></IconButton>
            ))}
            <Avatar>CE</Avatar>
          </Services>
        </DocumentBar>

        <Ribbon>
          <WorkspaceButton>DESIGN <Caret /></WorkspaceButton>
          <RibbonMain>
            <RibbonTabs>
              {ribbonTabs.map((name, i) => (
                <RibbonTab key={name} $active={i === tab} onClick={() => setTab(i)}>{name}</RibbonTab>
              ))}
            </RibbonTabs>
            <ToolGroups>
              {groups.map((g, i) => (
                <React.Fragment key={g.name}>
                  {i > 0 && <GroupDivider />}
                  <ToolGroup $width={g.width}>
                    <ToolRow>
                      {g.tools.map(([name, Icon]) => (
                        <ToolButton key={name} aria-label={name} $active={g.active}><Icon /></ToolButton>
                      ))}
                    </ToolRow>
                    <GroupLabel $wide={g.tools.length > 1}>{g.name}<Caret /></GroupLabel>
                  </ToolGroup>
                </React.Fragment>
              ))}
            </ToolGroups>
          </RibbonMain>
        </Ribbon>

        <Viewport>
          <Model />
          <ViewCube aria-label="View cube"><CubeArt /></ViewCube>
          <NavBar>
            {navTools.map(({ name, Icon, menu, split }) => (
              <NavButton key={name} aria-label={name} $split={split} $plain={!menu}>
                <Icon />
                {menu && <Caret w={12} h={8} />}
              </NavButton>
            ))}
          </NavBar>
        </Viewport>

        <Timeline>
          <Playback>
            {playback.map(([name, d]) => (
              <PlaybackButton key={name} aria-label={name}>
                <Svg s={32} v="0 0 32 32"><path d={d} fill="currentColor" /></Svg>
              </PlaybackButton>
            ))}
          </Playback>
          <History>
            <HistoryItems>
              {features.map(([name, Icon]) => (
                <li key={name}><ToolButton aria-label={name}><Icon s={32} /></ToolButton></li>
              ))}
            </HistoryItems>
            <HistoryTrack>{features.map(([name]) => <HistoryTick key={name} />)}</HistoryTrack>
          </History>
          <HistoryMarker aria-label="Timeline marker">
            <svg width="24" height="64" viewBox="0 0 24 64" aria-hidden="true">
              <path d="M0 0h24v8l-8 9h-2v47h-4V17H8L0 8z" fill="#646464" />
            </svg>
          </HistoryMarker>
          <SettingsButton aria-label="Settings"><GearIcon /></SettingsButton>
        </Timeline>
      </AppWindow>
    </Desktop>
  );
}
